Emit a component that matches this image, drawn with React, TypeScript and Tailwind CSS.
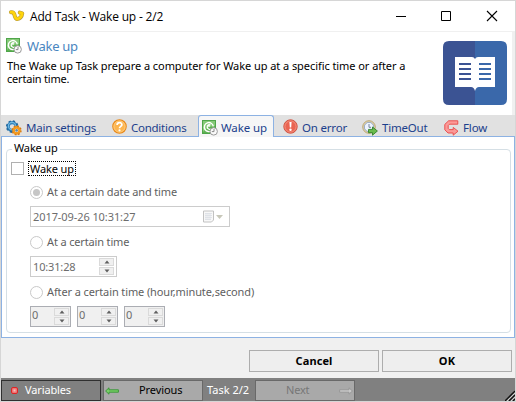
import type { ReactNode } from "react";

const Gear = () => (
  <svg width="16" height="16" viewBox="0 0 16 16">
    <circle cx="6.2" cy="6.6" r="4" fill="none" stroke="#2e7fb8" strokeWidth="3.2" />
    <circle cx="6.2" cy="6.6" r="5.4" fill="none" stroke="#25699f" strokeWidth="1.8" strokeDasharray="2.2 2.04" />
    <circle cx="6" cy="6" r="3.6" fill="none" stroke="#71b9e3" strokeWidth="1.2" />
    <circle cx="10.6" cy="10.4" r="3" fill="#fff" stroke="#f39a20" strokeWidth="2.6" />
    <circle cx="10.6" cy="10.4" r="4.4" fill="none" stroke="#d87910" strokeWidth="1.4" strokeDasharray="1.8 1.65" />
    <circle cx="10.6" cy="10.4" r="1.4" fill="#6289a4" />
  </svg>
);

const Question = () => (
  <svg width="15" height="15" viewBox="0 0 15 15" className="-mt-[2px]">
    <circle cx="7.5" cy="7.5" r="6.7" fill="#fdb54e" stroke="#e98a1c" strokeWidth="1.2" />
    <circle cx="7.5" cy="7.5" r="5.6" fill="none" stroke="#fed38c" strokeWidth=".8" />
    <path d="M5.1 6C5.1 2.9 9.9 2.9 9.9 5.8C9.9 7.4 7.5 7.3 7.5 9.2" fill="none" stroke="#fff" strokeWidth="1.7" />
    <circle cx="7.5" cy="11.3" r="1.1" fill="#fff" />
  </svg>
);

const WakeIcon = () => (
  <svg width="16" height="16" viewBox="0 0 16 16">
    <rect x=".5" y=".5" width="13" height="13" fill="#5db151" stroke="#4fa54a" />
    <path d="M1 1h12v5Q6 6 1 12z" fill="#85c977" />
    <path d="M9.8 10.5A4.5 4.5 0 1 1 11.3 6.4" fill="none" stroke="#fff" strokeWidth="1.4" />
    <path d="M8.8 8.9A2.3 2.3 0 1 1 8.5 4.9M7 4v3" fill="none" stroke="#fff" strokeWidth="1.2" />
    <circle cx="11.7" cy="11.4" r="3.7" fill="#fafafa" stroke="#9b9b9b" />
    <path d="M12 9v2.6H9.8" fill="none" stroke="#888" />
  </svg>
);

const ErrorIcon = () => (
  <svg width="15" height="15" viewBox="0 0 15 15" className="-mt-[2px]">
    <circle cx="7.5" cy="7.5" r="6.7" fill="#ea6451" stroke="#d05340" />
    <circle cx="7.5" cy="7.5" r="5.6" fill="none" stroke="#f49c8b" strokeWidth=".8" />
    <path d="M6.4 3h2.2l-.4 5.6H6.8z" fill="#fff" />
    <circle cx="7.5" cy="10.8" r="1.2" fill="#fff" />
  </svg>
);

const TimeIcon = () => (
  <svg width="16" height="16" viewBox="0 0 16 16">
    <circle cx="7" cy="7" r="6.3" fill="#e3d5ac" stroke="#b7a26b" strokeWidth=".9" />
    <circle cx="7" cy="7" r="4.7" fill="#edf4ff" stroke="#8c9fbd" strokeWidth=".9" />
    <path d="M7 4v3.3h2" fill="none" stroke="#75849c" />
    <path d="M6.5 9.4h4V7L15.4 11L10.5 15.2v-2.5h-4z" fill="#6abb4d" stroke="#328328" strokeWidth=".9" />
  </svg>
);

const FlowIcon = () => (
  <svg width="15" height="16" viewBox="0 0 15 16">
    <path d="M13.8 .8H4.6L.8 4.4V9.8L4 13H9.2v2.2l4.8-4L9.2 7.4v2.2H5.4L4.2 8.4V5.6L5.6 4.2H13.8z" fill="#fb9a98" stroke="#ea4646" strokeWidth=".9" strokeLinejoin="round" />
  </svg>
);

const BookIcon = () => (
  <svg width="64" height="64" viewBox="0 0 64 64">
    <path d="M6 0h26v64H6q-6 0-6-6V6q0-6 6-6" fill="#3b5393" />
    <path d="M32 0h26q6 0 6 6v52q0 6-6 6H32z" fill="#3a68aa" />
    <path d="M12 16h17q2 0 3 2q1-2 3-2h17v30H36q-3 0-4 4q-1-4-4-4H12z" fill="#fff" />
    <path d="M16 23h12M16 28h12M16 33h12M16 38h12" stroke="#3b5393" strokeWidth="2" />
    <path d="M36 23h12M36 28h12M36 33h12M36 38h12" stroke="#3a68aa" strokeWidth="2" />
  </svg>
);

const Arrow = ({ fill, stroke, flip }: { fill: string; stroke: string; flip?: boolean }) => (
  <svg width="14" height="8" viewBox="0 0 14 8" className={flip ? "-scale-x-100" : ""}>
    <path d="M.6 4L4 .8v2h9.4v2.4H4v2z" fill={fill} stroke={stroke} strokeWidth=".9" />
  </svg>
);

const Tab = ({ icon, children, className }: { icon: ReactNode; children: ReactNode; className: string }) => (
  <div className={`flex h-[21px] shrink-0 items-center whitespace-nowrap border-b border-[#8db2e3] pt-[3px] text-[11.5px] leading-4 text-[#1c3f8c] ${className}`}>
    {icon}
    <span>{children}</span>
  </div>
);

const Radio = ({ on, children, className = "" }: { on?: boolean; children: ReactNode; className?: string }) => (
  <div className={`flex h-[13px] items-center gap-[4px] whitespace-nowrap text-[#5f5f5f] ${className}`}>
    <span className="flex size-[13px] items-center justify-center rounded-full border border-[#c9c9c9] bg-white">
      {on && <span className="size-[7px] rounded-full bg-[#c6c6c6]" />}
    </span>
    <span className="pb-[2px]">{children}</span>
  </div>
);

const Spinner = () => (
  <div className="flex h-[17px] w-[15px] flex-col gap-px">
    {["M2.5 4.5L5 1.5L7.5 4.5z", "M2.5 1.5L5 4.5L7.5 1.5z"].map((d) => (
      <span key={d} className="flex h-[8px] items-center justify-center border border-[#dadada] bg-[#f0f0f0]">
        <svg width="10" height="6" viewBox="0 0 10 6"><path d={d} fill="#5f5f5f" /></svg>
      </span>
    ))}
  </div>
);

const NumberBox = () => (
  <div className="flex h-[21px] w-[41px] items-start justify-between border border-[#abadb3] bg-[#f0f0f0] pl-px pr-px pt-px text-[#6d6d6d]">
    <span className="leading-[13px]">0</span>
    <Spinner />
  </div>
);

export default function App() {
  return (
    <div className="flex h-[402px] w-[516px] flex-col overflow-hidden border border-[#d6d6d6] bg-[#f0f0f0] font-['Noto_Sans',sans-serif] text-[11px] leading-[13px] text-black">
      <div className="flex h-[31px] shrink-0 items-center border-b border-[#f0f0f0] bg-white pl-[8px]">
        <svg width="16" height="12" viewBox="0 0 16 12" fill="none" strokeLinecap="round" strokeLinejoin="round">
          <path d="M2 2.2Q4.6 1.8 5.4 4.6Q6.2 8.8 8 9Q12.6 8.2 13.2 3.4L10.8 2.6" stroke="#b89a3a" strokeWidth="4" />
          <path d="M2 2.2Q4.6 1.8 5.4 4.6Q6.2 8.8 8 9Q12.6 8.2 13.2 3.4L10.8 2.6" stroke="#fed40c" strokeWidth="2.8" />
        </svg>
        <span className="ml-[5px] font-['Open_Sans',sans-serif] text-[12px] tracking-[-0.19px]">Add Task - Wake up - 2/2</span>
        <svg width="102" height="12" viewBox="0 0 102 12" className="ml-auto mr-[17px]" fill="none" stroke="#000">
          <path d="M0 6.5h10M45.5 1.5h9v9h-9z" />
          <path d="M91 1l10 10M101 1l-10 10" strokeWidth="1.1" />
        </svg>
      </div>

      <div className="flex h-[83px] shrink-0 justify-between border-r-[3px] border-[#f0f0f0] bg-white">
        <div className="w-[420px] pl-[5px] pt-[6px]">
          <div className="flex items-center gap-[5px] whitespace-nowrap text-[13px] leading-4 text-[#4a86bf]">
            <WakeIcon />
            <span className="tracking-[-0.3px]">Wake up</span>
          </div>
          <div className="mt-[5px] whitespace-nowrap pl-px">
            <p className="tracking-[-0.065px]">The Wake up Task prepare a computer for Wake up at a specific time or after a</p>
            <p className="tracking-[-0.2px]">certain time.</p>
          </div>
        </div>
        <div className="mr-[5px] mt-[9px]"><BookIcon /></div>
      </div>

      <div className="flex h-[22px] shrink-0 items-end bg-[#e1e1e1]">
        <Tab icon={<Gear />} className="w-[105px] gap-[4px] pl-[5px] tracking-[-0.21px]">Main settings</Tab>
        <Tab icon={<Question />} className="w-[92px] gap-[4px] pl-[6px] tracking-[-0.26px]">Conditions</Tab>
        <div className="flex h-[22px] w-[76px] shrink-0 items-center gap-[3px] whitespace-nowrap rounded-t-[3px] border border-b-0 border-[#8db2e3] bg-[#f6f6f6] pl-[3px] pt-[3px] text-[11.5px] leading-4 tracking-[-0.1px] text-[#1c3f8c]">
          <WakeIcon /><span>Wake up</span>
        </div>
        <Tab icon={<ErrorIcon />} className="w-[87px] gap-[4px] pl-[9px] tracking-[-0.2px]">On error</Tab>
        <Tab icon={<TimeIcon />} className="w-[83px] gap-[4px] pl-px tracking-[-0.2px]">TimeOut</Tab>
        <Tab icon={<FlowIcon />} className="w-[71px] gap-[4px] pl-0 tracking-[-0.15px]">Flow</Tab>
      </div>

      <div className="h-[201px] shrink-0 border border-t-0 border-[#8db2e3] bg-white pl-[4px] pr-[3px] pt-[5px]">
        <fieldset className="h-[191px] rounded-[4px] border border-[#d5dfe5] pl-[4px]">
          <legend className="ml-px h-[14px] px-[2px] leading-[12px] tracking-[-0.15px]">Wake up</legend>
          <div className="mt-[5px] flex h-[15px] items-center gap-[4px]">
            <span className="size-[13px] border border-[#b0b0b0]" />
            <span className="flex h-[15px] w-[48px] items-center border border-dotted border-black pl-px tracking-[-0.1px]">Wake up</span>
          </div>
          <div className="pl-[19px]">
            <Radio on className="mt-[10px] tracking-[-0.13px]">At a certain date and time</Radio>
            <div className="mt-[7px] flex h-[21px] w-[200px] items-center border border-[#cccccc] pl-[2px] text-[#6d6d6d]">
              <span className="tracking-[-0.08px]">2017-09-26 10:31:27</span>
              <svg width="22" height="13" viewBox="0 0 22 13" className="ml-auto mr-[5px]">
                <path d="M1.5 1h10v9l-2 2h-8z" fill="#f8f8f8" stroke="#c2c2c2" />
                <path d="M3 3.5h7M3 5.5h7M3 7.5h7M3 9.5h6M4 3v7M6 3v7M8 3v7" stroke="#d9dce4" strokeWidth=".7" />
                <path d="M14 5h7l-3.5 4z" fill="#c7c7b9" />
              </svg>
            </div>
            <Radio className="mt-[9px] tracking-[-0.15px]">At a certain time</Radio>
            <div className="mt-[7px] flex h-[21px] w-[87px] items-center justify-between border border-[#cccccc] pl-[2px] pr-[2px] text-[#6d6d6d]">
              <span className="tracking-[-0.15px]">10:31:28</span>
              <Spinner />
            </div>
            <Radio className="mt-[9px] tracking-[-0.11px]">After a certain time (hour,minute,second)</Radio>
            <div className="mt-[7px] flex gap-[6px]"><NumberBox /><NumberBox /><NumberBox /></div>
          </div>
        </fieldset>
      </div>

      <div className="flex h-[40px] shrink-0 gap-[3px] pl-[248px] pt-[12px] text-[11px] font-bold">
        <div className="flex h-[22px] w-[130px] items-center justify-center border border-[#adadad] bg-[#eeeeee] pb-[2px] tracking-[0.1px]">Cancel</div>
        <div className="flex h-[22px] w-[130px] items-center justify-center border border-[#adadad] bg-[#eeeeee] pb-[2px] tracking-[0.3px]">OK</div>
      </div>

      <div className="flex h-[23px] shrink-0 bg-[#808080] pt-[2px]">
        <div className="flex h-[21px] w-[100px] items-center border border-[#303030] pl-[9px] text-white">
          <svg width="7" height="7" viewBox="0 0 7 7"><rect x=".5" y=".5" width="6" height="6" rx="1.5" fill="#ee7777" stroke="#dc2525" /><rect x="2.5" y="2.5" width="2" height="2" fill="#fbc0c0" /></svg>
          <span className="ml-[7px] pb-[2px] tracking-[-0.13px]">Variables</span>
        </div>
        <div className="ml-[2px] flex h-[21px] w-[100px] items-center border border-[#696969] bg-[#a9a9a9] pl-px">
          <Arrow fill="#78cf67" stroke="#369334" />
          <span className="ml-[20px] pb-[2px] tracking-[-0.1px]">Previous</span>
        </div>
        <span className="w-[51px] pl-[4px] leading-[19px] text-white">Task 2/2</span>
        <div className="ml-px flex h-[21px] w-[100px] items-center border border-[#696969] bg-[#a9a9a9] pl-[30px] text-[#777777]">
          <span className="pb-[2px] tracking-[-0.2px]">Next</span>
          <span className="ml-auto mr-px"><Arrow fill="#c9c9c9" stroke="#959595" flip /></span>
        </div>
        <svg width="10" height="11" viewBox="0 0 10 11" className="ml-auto mt-[10px]">
          <path d="M0 11L10 0v11z" fill="#999" />
          <path d="M0 11L10 1M4 11L10 5M8 11l2-2" stroke="#111" strokeWidth="1.4" />
          <path d="M2 11L10 3M6 11L10 7" stroke="#e0e0e0" strokeWidth=".8" />
        </svg>
      </div>
    </div>
  );
}
